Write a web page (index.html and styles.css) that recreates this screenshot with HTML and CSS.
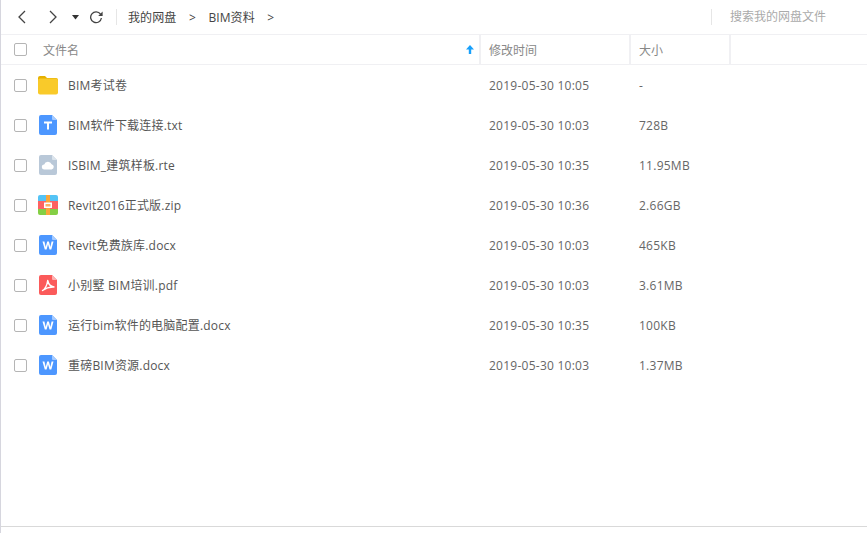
FILE: index.html
```html
<!DOCTYPE html>
<html lang="zh-CN">
<head>
<meta charset="utf-8">
<title>我的网盘</title>
<link rel="stylesheet" href="styles.css">
</head>
<body>
<svg class="defs" width="0" height="0" aria-hidden="true">
  <defs>
    <symbol id="sheet-blue" viewBox="0 0 18 20"><path d="M2 0H13L18 5V18a2 2 0 0 1-2 2H2a2 2 0 0 1-2-2V2a2 2 0 0 1 2-2z" fill="#4d97ff"/><path d="M13 0L18 5H14a1 1 0 0 1-1-1z" fill="#a6cbff"/></symbol>
  </defs>
</svg>
<main class="app">
  <header class="toolbar">
    <div class="nav">
      <svg class="nav-back" width="10" height="14" viewBox="0 0 10 14"><path d="M8 1L2 7l6 6" fill="none" stroke="#444" stroke-width="1.3"/></svg>
      <svg class="nav-forward" width="10" height="14" viewBox="0 0 10 14"><path d="M2 1l6 6-6 6" fill="none" stroke="#444" stroke-width="1.3"/></svg>
      <svg class="nav-drop" width="7" height="5" viewBox="0 0 7 5"><path d="M0 0h7L3.500 4.500z" fill="#333"/></svg>
      <svg class="nav-refresh" width="14" height="14" viewBox="0 0 14 14"><path d="M11.500 4.200A5.400 5.400 0 1 0 12.400 8" fill="none" stroke="#444" stroke-width="1.300"/><path d="M13.600 1.600V6H9.200z" fill="#444"/></svg>
    </div>
    <nav class="crumbs">
      <span>我的网盘</span><span class="sep">&gt;</span><span>BIM资料</span><span class="sep">&gt;</span>
    </nav>
    <div class="search">搜索我的网盘文件</div>
  </header>

  <div class="row head">
    <div class="cell-check"><span class="box"></span></div>
    <div class="cell-name head-name">文件名
      <svg class="sort" width="8" height="9" viewBox="0 0 8 9"><path d="M4 0L8 4.500H5.200V9H2.800V4.500H0z" fill="#18a0fb"/></svg>
    </div>
    <div class="cell-time head-cell">修改时间</div>
    <div class="cell-size head-cell">大小</div>
    <div class="cell-rest"></div>
  </div>

  <div class="list">
    <div class="row item">
      <div class="cell-check"><span class="box"></span></div>
      <div class="cell-name">
        <svg class="icon" width="20" height="20" viewBox="0 0 20 20"><path d="M0 3a2 2 0 0 1 2-2h5l2 2h9a2 2 0 0 1 2 2v1H0z" fill="#e5b000"/><rect y="3.500" width="20" height="16" rx="2" fill="#f9ca2a"/></svg>
        <span>BIM考试卷</span>
      </div>
      <div class="cell-time">2019-05-30 10:05</div>
      <div class="cell-size">-</div>
      <div class="cell-rest"></div>
    </div>

    <div class="row item">
      <div class="cell-check"><span class="box"></span></div>
      <div class="cell-name">
        <svg class="icon" width="20" height="20" viewBox="-1 0 20 20"><use href="#sheet-blue" width="18" height="20"/><path d="M5 6.500h8v2H10V14.500H8V8.500H5z" fill="#fff"/></svg>
        <span>BIM软件下载连接.txt</span>
      </div>
      <div class="cell-time">2019-05-30 10:03</div>
      <div class="cell-size">728B</div>
      <div class="cell-rest"></div>
    </div>

    <div class="row item">
      <div class="cell-check"><span class="box"></span></div>
      <div class="cell-name">
        <svg class="icon" width="20" height="20" viewBox="-1 0 20 20"><path d="M2 0H13L18 5V18a2 2 0 0 1-2 2H2a2 2 0 0 1-2-2V2a2 2 0 0 1 2-2z" fill="#b9c8d8"/><path d="M13 0L18 5H14a1 1 0 0 1-1-1z" fill="#dbe4ec"/><path d="M5.500 14.500a2.500 2.500 0 0 1-.3-5 3.900 3.900 0 0 1 7.400-.3 2.700 2.700 0 0 1 0 5.300z" fill="#fff"/></svg>
        <span>ISBIM_建筑样板.rte</span>
      </div>
      <div class="cell-time">2019-05-30 10:35</div>
      <div class="cell-size">11.95MB</div>
      <div class="cell-rest"></div>
    </div>

    <div class="row item">
      <div class="cell-check"><span class="box"></span></div>
      <div class="cell-name">
        <svg class="icon" width="20" height="20" viewBox="0 0 20 20"><path d="M2 0H18a2 2 0 0 1 2 2V6H0V2a2 2 0 0 1 2-2z" fill="#54c3f5"/><rect y="6" width="20" height="8" fill="#fd6262"/><path d="M0 14H20V18a2 2 0 0 1-2 2H2a2 2 0 0 1-2-2z" fill="#84cf44"/><rect x="8" width="4" height="20" fill="#f9a63a"/><rect x="6" y="7.500" width="8" height="5.500" fill="#fff"/><rect x="7.500" y="9" width="5" height="2.500" fill="#fab06a"/></svg>
        <span>Revit2016正式版.zip</span>
      </div>
      <div class="cell-time">2019-05-30 10:36</div>
      <div class="cell-size">2.66GB</div>
      <div class="cell-rest"></div>
    </div>

    <div class="row item">
      <div class="cell-check"><span class="box"></span></div>
      <div class="cell-name">
        <svg class="icon" width="20" height="20" viewBox="-1 0 20 20"><use href="#sheet-blue" width="18" height="20"/><path d="M3.500 6.500H5.400L6.700 12 8.200 6.500H9.900L11.300 12 12.600 6.500H14.500L12.300 14.500H10.500L9 9.300 7.600 14.500H5.800z" fill="#fff"/></svg>
        <span>Revit免费族库.docx</span>
      </div>
      <div class="cell-time">2019-05-30 10:03</div>
      <div class="cell-size">465KB</div>
      <div class="cell-rest"></div>
    </div>

    <div class="row item">
      <div class="cell-check"><span class="box"></span></div>
      <div class="cell-name">
        <svg class="icon" width="20" height="20" viewBox="-1 0 20 20"><path d="M2 0H13L18 5V18a2 2 0 0 1-2 2H2a2 2 0 0 1-2-2V2a2 2 0 0 1 2-2z" fill="#fb5a5a"/><path d="M13 0L18 5H14a1 1 0 0 1-1-1z" fill="#fdb1b1"/><path d="M3.500 15.500C6 14 8 10.500 8.700 5.500 9.600 9.500 11.500 11.500 15 12 11 11.800 7 13 3.500 15.500z" fill="none" stroke="#fff" stroke-width="1.400" stroke-linejoin="round"/></svg>
        <span>小别墅 BIM培训.pdf</span>
      </div>
      <div class="cell-time">2019-05-30 10:03</div>
      <div class="cell-size">3.61MB</div>
      <div class="cell-rest"></div>
    </div>

    <div class="row item">
      <div class="cell-check"><span class="box"></span></div>
      <div class="cell-name">
        <svg class="icon" width="20" height="20" viewBox="-1 0 20 20"><use href="#sheet-blue" width="18" height="20"/><path d="M3.500 6.500H5.400L6.700 12 8.200 6.500H9.900L11.300 12 12.600 6.500H14.500L12.300 14.500H10.500L9 9.300 7.600 14.500H5.800z" fill="#fff"/></svg>
        <span>运行bim软件的电脑配置.docx</span>
      </div>
      <div class="cell-time">2019-05-30 10:35</div>
      <div class="cell-size">100KB</div>
      <div class="cell-rest"></div>
    </div>

    <div class="row item">
      <div class="cell-check"><span class="box"></span></div>
      <div class="cell-name">
        <svg class="icon" width="20" height="20" viewBox="-1 0 20 20"><use href="#sheet-blue" width="18" height="20"/><path d="M3.500 6.500H5.400L6.700 12 8.200 6.500H9.900L11.300 12 12.600 6.500H14.500L12.300 14.500H10.500L9 9.300 7.600 14.500H5.800z" fill="#fff"/></svg>
        <span>重磅BIM资源.docx</span>
      </div>
      <div class="cell-time">2019-05-30 10:03</div>
      <div class="cell-size">1.37MB</div>
      <div class="cell-rest"></div>
    </div>
  </div>

  <footer class="status"></footer>
</main>
</body>
</html>
```

FILE: styles.css
```css
* { box-sizing: border-box; }
html, body { margin: 0; height: 100%; background: #fff; overflow: hidden; }
body { font-family: "Open Sans", "Noto Sans CJK SC", sans-serif; font-size: 12px; color: #666; }
.defs { position: absolute; }
.app {
  height: 533px;
  display: flex;
  flex-direction: column;
  border-left: 1px solid #d6d6de;
}
.toolbar {
  height: 35px;
  flex: none;
  display: flex;
  align-items: center;
  border-bottom: 1px solid #f0f0f3;
  padding-left: 16px;
}
.nav { display: flex; align-items: center; width: 100px; height: 16px; border-right: 1px solid #e6e6e6; }
.nav-forward { margin-left: 21px; }
.nav-drop { margin-left: 14px; }
.nav-refresh { margin-left: 10px; }
.crumbs { display: flex; align-items: center; margin-left: 11px; color: #444; flex: 1; letter-spacing: .1px; }
.sep { width: 32px; text-align: center; font-size: 12px; }
.crumbs .sep:last-child { width: 32px; }
.search { width: 156px; height: 16px; line-height: 16px; padding-left: 18px; border-left: 1px solid #e6e6e6; color: #aaa; }
.row { display: grid; grid-template-columns: 478px 150px 100px 1fr; align-items: center; position: relative; }
.head { height: 30px; flex: none; border-bottom: 1px solid #f0f0f3; color: #888; }
.head > div { height: 100%; display: flex; align-items: center; }
.head-cell { border-left: 2px solid #f0f0f3; padding-left: 8px; }
.head .cell-rest { border-left: 2px solid #f0f0f3; }
.head-name { padding-left: 42px; position: relative; justify-content: space-between; padding-right: 5px; }
.item { height: 40px; color: #666; }
.item .cell-name { color: #555; display: flex; align-items: center; padding-left: 37px; letter-spacing: .2px; }
.item .cell-time, .item .cell-size { padding-left: 10px; letter-spacing: .25px; }
.cell-check { position: absolute; left: 13px; top: 0; bottom: 0; display: flex; align-items: center; }
.box { width: 13px; height: 13px; border: 1px solid #b5b5b5; border-radius: 2px; background: #fff; display: block; }
.icon { flex: none; margin-right: 10px; }
.list { flex: none; }
.status { margin-top: auto; height: 7px; border-top: 1px solid #d9d9d9; flex: none; }
```
